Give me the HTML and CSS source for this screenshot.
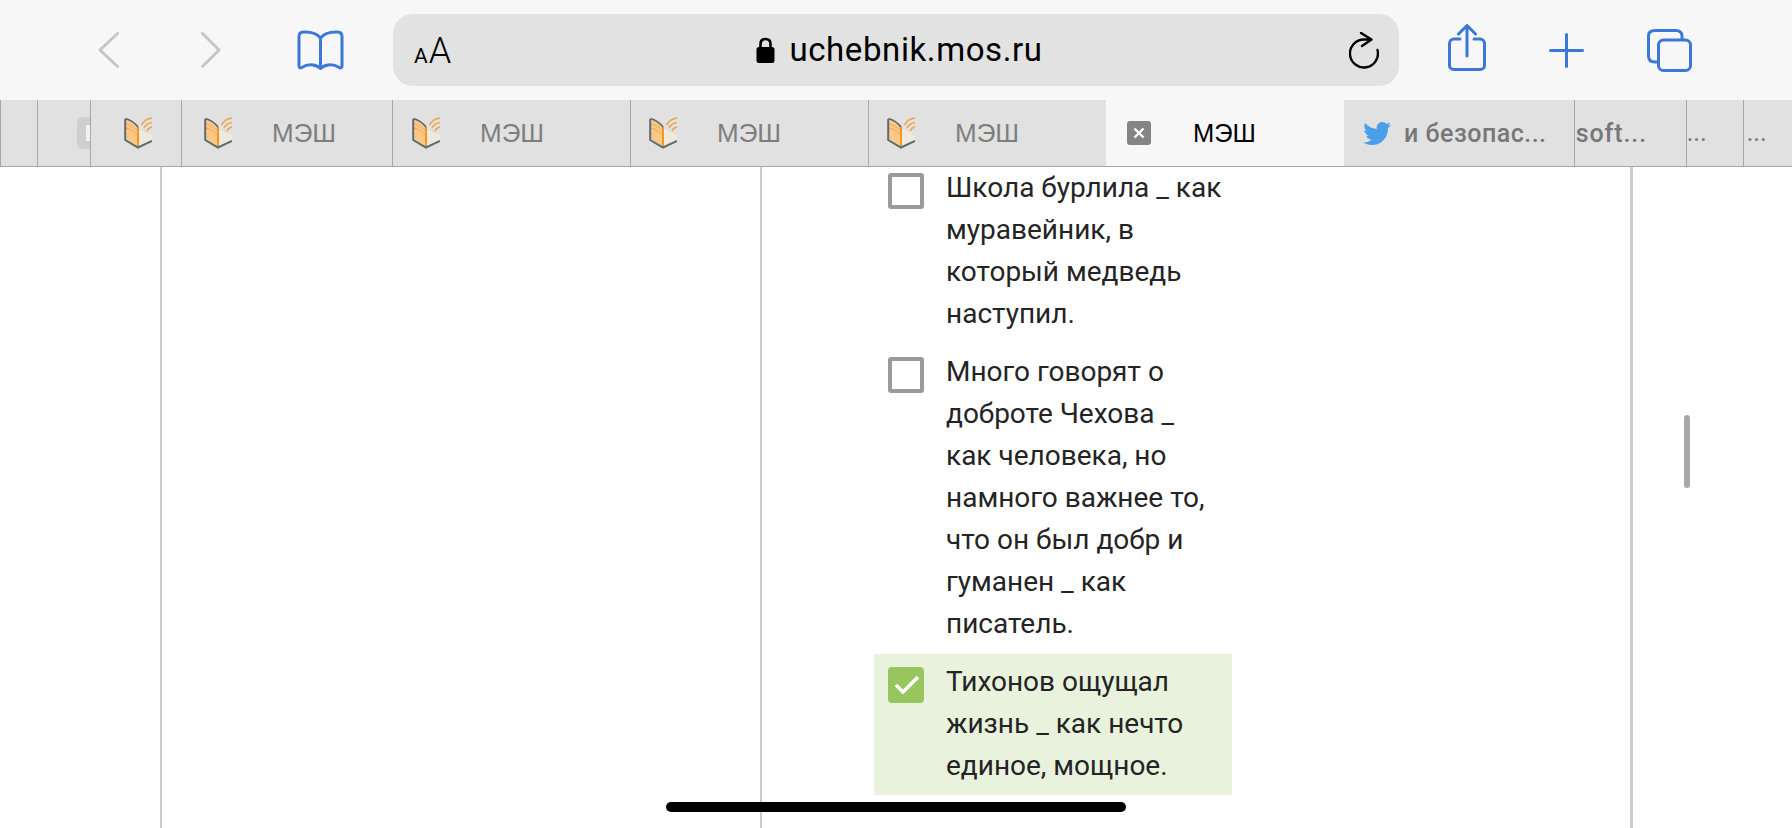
FILE: index.html
```html
<!DOCTYPE html>
<html lang="ru">
<head>
<meta charset="utf-8">
<title>МЭШ</title>
<link rel="stylesheet" href="styles.css">
</head>
<body>
<svg class="defs" width="0" height="0" aria-hidden="true">
  <symbol id="mesh" viewBox="0 0 28 32">
    <path d="M1 1.500 C6 3 11 6 14 10 V30 C10 27 5 24 1 22.500 Z" fill="#fbc888"/>
    <path d="M14 11 C15.500 12 17 13 19 14 L28 18 V24 L14 30 Z" fill="#f1e9dc"/>
    <path d="M2 7 C6 8 11 10.500 14 14 M2 11 C6 12 11 14.500 14 18" fill="none" stroke="#f0a850" stroke-width="1"/>
    <path d="M14 10 V30" stroke="#ef9a22" stroke-width="2"/>
    <path d="M1.200 2 V23 L14 30.500 L28 24" fill="none" stroke="#5f6b73" stroke-width="2"/>
    <path d="M1.500 1.500 C6 3 11 6 14 10" fill="none" stroke="#5f6b73" stroke-width="1.800"/>
    <path d="M17.500 8 C20 3.500 24 1.500 28 1 M20 11 C21.500 8 24.500 6 28 5.500 M23 14 C23.800 12 25.500 10.500 28 10" fill="none" stroke="#f0a545" stroke-width="1.600"/>
  </symbol>
</svg>

<header class="toolbar">
  <svg class="tool back" width="21" height="36" viewBox="0 0 21 36"><path d="M19.500 1.500 L2 18 L19.500 34.500" fill="none" stroke="#c6c6c6" stroke-width="3" stroke-linecap="round" stroke-linejoin="round"/></svg>
  <svg class="tool forward" width="20" height="36" viewBox="0 0 20 36"><path d="M1.500 1.500 L18 18 L1.500 34.500" fill="none" stroke="#c6c6c6" stroke-width="3" stroke-linecap="round" stroke-linejoin="round"/></svg>
  <svg class="tool bookmarks" width="47" height="40" viewBox="0 0 47 40"><path d="M23.500 8 C20 3.500 14 2 8 2 H6.500 C3.500 2 2 3.500 2 6.500 V36 C2 37.800 3.200 38.500 4.800 37.500 C8 35.500 12 34.500 16 35 C19 35.500 22 36.800 23.500 38.500 C25 36.800 28 35.500 31 35 C35 34.500 39 35.500 42.200 37.500 C43.800 38.500 45 37.800 45 36 V6.500 C45 3.500 43.500 2 40.500 2 H39 C33 2 27 3.500 23.500 8 Z M23.500 8 V38" fill="none" stroke="#3b78d8" stroke-width="3" stroke-linejoin="round"/></svg>
  <div class="urlbar">
    <div class="aa"><span class="aa-small">A</span><span class="aa-large">A</span></div>
    <div class="address">
      <svg width="19" height="26" viewBox="0 0 19 26"><path d="M4.500 11 V7 C4.500 3.800 6.500 2 9.500 2 C12.500 2 14.500 3.800 14.500 7 V11" fill="none" stroke="#000" stroke-width="2.600"/><rect x="0.500" y="10" width="18" height="16" rx="2.500" fill="#000"/></svg>
      <span class="address-text">uchebnik.mos.ru</span>
    </div>
    <svg class="reload" width="30" height="37" viewBox="0 0 30 37"><path d="M22 7.500 H15 A14 14 0 1 0 28.500 18 M12 1 L22.500 7.500 L13 14" fill="none" stroke="#000" stroke-width="2.400" stroke-linecap="round" stroke-linejoin="round"/></svg>
  </div>
  <svg class="tool share" width="38" height="52" viewBox="0 0 38 52"><path d="M12 15 H6 C3.500 15 1.500 17 1.500 19.500 V41.500 C1.500 44 3.500 45.500 6 45.500 H32 C34.500 45.500 36.500 44 36.500 41.500 V19.500 C36.500 17 34.500 15 32 15 H26 M19 32 V2 M10.500 10 L19 1.500 L27.500 10" fill="none" stroke="#3b78d8" stroke-width="3" stroke-linecap="round" stroke-linejoin="round"/></svg>
  <svg class="tool plus" width="35" height="35" viewBox="0 0 35 35"><path d="M17.500 1.500 V33.500 M1.500 17.500 H33.500" fill="none" stroke="#3b78d8" stroke-width="3" stroke-linecap="round"/></svg>
  <svg class="tool copies" width="45" height="43" viewBox="0 0 45 43"><rect x="11.500" y="11" width="32" height="30.500" rx="5" fill="none" stroke="#3b78d8" stroke-width="3"/><path d="M11 33 H8 C4 33 1.500 31 1.500 27 V7 C1.500 3.500 4 1.500 8 1.500 H29 C32.500 1.500 35 3.500 35 7 V11" fill="none" stroke="#3b78d8" stroke-width="3"/></svg>
</header>

<nav class="tabs">
  <div class="tab tab-a"></div>
  <div class="tab tab-b"><div class="ghost-close"><span class="ghost-mark"></span></div></div>
  <div class="tab tab-c"><svg class="fav" width="28" height="32"><use href="#mesh"/></svg></div>
  <div class="tab tab-d"><svg class="fav" width="28" height="32"><use href="#mesh"/></svg><span class="tab-title">МЭШ</span></div>
  <div class="tab tab-e"><svg class="fav" width="28" height="32"><use href="#mesh"/></svg><span class="tab-title">МЭШ</span></div>
  <div class="tab tab-f"><svg class="fav" width="28" height="32"><use href="#mesh"/></svg><span class="tab-title">МЭШ</span></div>
  <div class="tab tab-f"><svg class="fav" width="28" height="32"><use href="#mesh"/></svg><span class="tab-title">МЭШ</span></div>
  <div class="tab tab-active">
    <svg class="close" width="24" height="24" viewBox="0 0 24 24"><rect width="24" height="24" rx="3" fill="#858585"/><path d="M7.500 7.500 L16.500 16.500 M16.500 7.500 L7.500 16.500" stroke="#fff" stroke-width="2.400"/></svg>
    <span class="tab-title tab-title-active">МЭШ</span>
  </div>
  <div class="tab tab-g">
    <svg class="bird" width="28" height="23" viewBox="0 0 24 20"><path d="M24 2.400 c-.9.400-1.800.700-2.800.800 1-.600 1.800-1.600 2.200-2.700 -1 .600-2 1-3.100 1.200 C19.300.700 18 0 16.600 0 13.900 0 11.700 2.200 11.700 4.900 c0 .400 0 .800.100 1.100 C7.700 5.800 4.100 3.900 1.700.900 1.200 1.600 1 2.500 1 3.400 c0 1.700.900 3.200 2.200 4.100 -.800 0-1.600-.200-2.200-.600 v.100 c0 2.400 1.700 4.400 3.900 4.800 -.400.100-.800.200-1.300.200 -.300 0-.600 0-.900-.100 .600 2 2.400 3.400 4.600 3.400 C5.600 17.100 3.500 17.900 1.200 17.900 .800 17.900.400 17.900 0 17.800 2.200 19.200 4.800 20 7.500 20 c9.100 0 14-7.500 14-14 v-.600 C22.500 4.700 23.300 3.600 24 2.400 z" fill="#4a9fe8"/></svg>
    <span class="tab-title tab-title-long">и безопас...</span>
  </div>
  <div class="tab tab-h"><span class="tab-title tab-title-long tab-title-clip">Microsoft...</span></div>
  <div class="tab tab-i"><span class="tab-title tab-title-long tab-dots">...</span></div>
  <div class="tab tab-j"><span class="tab-title tab-title-long tab-dots">...</span></div>
</nav>

<main class="page">
  <div class="sheet">
    <div class="left-col"></div>
    <div class="right-col">
      <ul class="options">
        <li class="option">
          <span class="box"></span>
          <span class="option-text">Школа бурлила _ как муравейник, в который медведь наступил.</span>
        </li>
        <li class="option">
          <span class="box"></span>
          <span class="option-text">Много говорят о доброте Чехова _ как человека, но намного важнее то, что он был добр и гуманен _ как писатель.</span>
        </li>
        <li class="option option-checked">
          <span class="box box-checked"><svg width="36" height="36" viewBox="0 0 36 36"><path d="M8 18 L15 25 L30 10" fill="none" stroke="#fff" stroke-width="3.600"/></svg></span>
          <span class="option-text">Тихонов ощущал жизнь _ как нечто единое, мощное.</span>
        </li>
      </ul>
    </div>
  </div>
  <div class="scrollbar"></div>
  <div class="home-indicator"></div>
</main>
</body>
</html>
```
FILE: styles.css
```css
* { box-sizing: border-box; }
html, body { margin: 0; padding: 0; height: 100%; overflow: hidden; background: #fff; }
body { display: flex; flex-direction: column; font-family: Roboto, "Liberation Sans", sans-serif; }
.defs { position: absolute; }

.toolbar { height: 100px; flex: none; display: flex; align-items: center; background: #f7f7f7; }
.tool { flex: none; display: block; }
.back { margin-left: 98px; }
.forward { margin-left: 82px; }
.bookmarks { margin-left: 76px; }
.share { margin-left: 49px; }
.plus { margin-left: 63px; }
.copies { margin-left: 63px; }

.urlbar { margin-left: 49px; width: 1006px; height: 72px; flex: none; display: grid; grid-template-columns: 1fr auto 1fr; align-items: center; padding: 0 20px 0 21px; background: #e2e2e2; border-radius: 20px; color: #000; }
.aa { display: flex; align-items: baseline; line-height: 1; margin-top: 1px; }
.aa-small { font-size: 21px; margin-right: 1px; }
.aa-large { font-size: 36px; font-weight: 300; }
.address { display: flex; align-items: center; gap: 14px; margin-left: 6px; }
.address-text { font-size: 33px; line-height: 40px; letter-spacing: 0.6px; }
.reload { justify-self: end; }

.tabs { height: 67px; flex: none; display: flex; background: #e1e1e1; border-bottom: 1.500px solid #a6a6a6; }
.tab { flex: none; height: 100%; display: flex; align-items: center; overflow: hidden; border-left: 1px solid #a8a8a8; white-space: nowrap; }
.tab-a { width: 37px; }
.tab-b { width: 53px; padding-left: 39px; }
.tab-c { width: 91px; padding-left: 33px; }
.tab-d { width: 211px; padding-left: 22px; }
.tab-e { width: 238px; padding-left: 19px; }
.tab-f { width: 238px; padding-left: 18px; }
.tab-active { width: 238px; padding-left: 21px; background: #f7f7f7; border-left: 0; }
.tab-g { width: 230px; padding-left: 19px; border-left: 0; }
.tab-h { width: 112px; justify-content: flex-end; padding-right: 39px; }
.tab-i { width: 57px; padding-left: 0; }
.tab-j { flex: 1; padding-left: 3px; }

.fav { flex: none; }
.tab-title { margin-left: 40px; font-family: "Liberation Sans", sans-serif; font-size: 26px; color: #7e7e7e; }
.tab-title-active { margin-left: 42px; font-size: 25.500px; color: #000; }
.tab-title-long { margin-left: 0; font-family: Roboto, sans-serif; font-weight: 500; font-size: 25px; letter-spacing: 0.5px; color: #777; }
.tab-title-clip { letter-spacing: 0.9px; }
.tab-dots { font-size: 22px; }
.tab-g .tab-title-long { margin-left: 13px; }
.ghost-close { width: 32px; height: 32px; flex: none; border-radius: 6px; background: #cfcfd3; display: flex; align-items: center; padding-left: 9px; }
.ghost-mark { width: 8px; height: 16px; background: #f0f0f0; }
.close, .bird { flex: none; }

.page { flex: 1; min-height: 0; position: relative; overflow: hidden; padding-left: 160px; }
.sheet { width: 1473px; height: 100%; display: flex; border-left: 2px solid #c9c9c9; border-right: 3px solid #cdcdcd; }
.left-col { width: 600px; flex: none; border-right: 2px solid #c9c9c9; }
.right-col { flex: 1; padding-left: 112px; }
.options { list-style: none; margin: -7px 0 0; padding: 0; width: 358px; display: flex; flex-direction: column; gap: 2px; }
.option { display: flex; gap: 22px; padding: 7px 8px 7px 14px; font-size: 28px; line-height: 42px; color: #242424; }
.option-checked { padding-bottom: 8px; background: #e8f2dc; }
.box { width: 36px; height: 36px; flex: none; margin-top: 6px; border: 4px solid #9b9b9b; border-radius: 3px; display: block; }
.box-checked { border: 0; background: #97c65f; border-radius: 4px; }
.box-checked svg { display: block; }
.option-text { flex: 1; min-width: 0; }

.scrollbar { position: absolute; left: 1684px; top: 248px; width: 6px; height: 73px; border-radius: 3px; background: #a8a8a8; }
.home-indicator { position: absolute; left: 666px; top: 635px; width: 460px; height: 10px; border-radius: 5px; background: #000; }
```
